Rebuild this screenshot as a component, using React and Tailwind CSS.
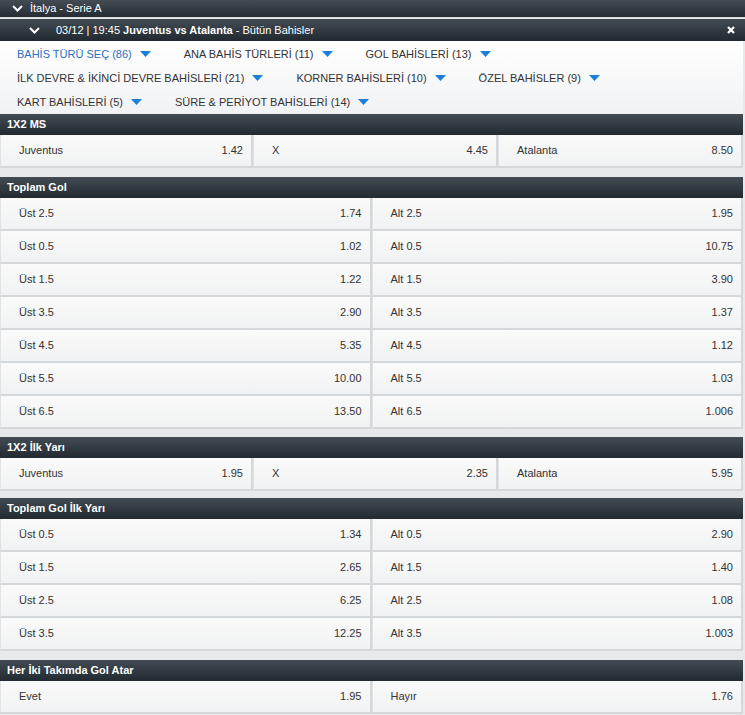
const font = { fontFamily: '"Liberation Sans", Arial, sans-serif' }

const filters = [
  [
    ['BAHİS TÜRÜ SEÇ (86)', true],
    ['ANA BAHİS TÜRLERİ (11)'],
    ['GOL BAHİSLERİ (13)'],
  ],
  [
    ['İLK DEVRE & İKİNCİ DEVRE BAHİSLERİ (21)'],
    ['KORNER BAHİSLERİ (10)'],
    ['ÖZEL BAHİSLER (9)'],
  ],
  [['KART BAHİSLERİ (5)'], ['SÜRE & PERİYOT BAHİSLERİ (14)']],
]

const markets = [
  {
    title: '1X2 MS',
    cols: 3,
    gap: 'mb-[9px]',
    rows: [
      [
        ['Juventus', '1.42'],
        ['X', '4.45'],
        ['Atalanta', '8.50'],
      ],
    ],
  },
  {
    title: 'Toplam Gol',
    cols: 2,
    gap: 'mb-[8px]',
    rows: [
      [['Üst 2.5', '1.74'], ['Alt 2.5', '1.95']],
      [['Üst 0.5', '1.02'], ['Alt 0.5', '10.75']],
      [['Üst 1.5', '1.22'], ['Alt 1.5', '3.90']],
      [['Üst 3.5', '2.90'], ['Alt 3.5', '1.37']],
      [['Üst 4.5', '5.35'], ['Alt 4.5', '1.12']],
      [['Üst 5.5', '10.00'], ['Alt 5.5', '1.03']],
      [['Üst 6.5', '13.50'], ['Alt 6.5', '1.006']],
    ],
  },
  {
    title: '1X2 İlk Yarı',
    cols: 3,
    gap: 'mb-[7px]',
    rows: [
      [
        ['Juventus', '1.95'],
        ['X', '2.35'],
        ['Atalanta', '5.95'],
      ],
    ],
  },
  {
    title: 'Toplam Gol İlk Yarı',
    cols: 2,
    gap: 'mb-[9px]',
    rows: [
      [['Üst 0.5', '1.34'], ['Alt 0.5', '2.90']],
      [['Üst 1.5', '2.65'], ['Alt 1.5', '1.40']],
      [['Üst 2.5', '6.25'], ['Alt 2.5', '1.08']],
      [['Üst 3.5', '12.25'], ['Alt 3.5', '1.003']],
    ],
  },
  {
    title: 'Her İki Takımda Gol Atar',
    cols: 2,
    gap: 'mb-[9px]',
    rows: [[['Evet', '1.95'], ['Hayır', '1.76']]],
  },
]

const Chevron = () => (
  <svg width="11" height="7" viewBox="0 0 11 7">
    <polyline points="1,1 5.5,5.5 10,1" fill="none" stroke="#fff" strokeWidth="2" />
  </svg>
)

const Caret = () => (
  <svg width="11" height="6" viewBox="0 0 11 6">
    <polygon points="0,0 11,0 5.5,6" fill="#1a7fd6" />
  </svg>
)

const App = () => {
  return (
    <div className="min-h-screen bg-[#e8e9ea] text-[11px] text-[#333]" style={font}>
      <div className="h-[18px] flex items-center bg-gradient-to-b from-[#444d55] to-[#252c33] text-white border-b border-[#d9dde0]">
        <div className="w-[30px] flex justify-center pl-[4px]">
          <Chevron />
        </div>
        <span>İtalya - Serie A</span>
      </div>
      <div className="mt-[1px] h-[22px] flex items-center bg-gradient-to-b from-[#434c54] to-[#222930] text-white">
        <div className="w-[56px] flex justify-center pl-[17px] pr-[4px]">
          <Chevron />
        </div>
        <span>
          03/12 | 19:45 <b>Juventus vs Atalanta</b> - Bütün Bahisler
        </span>
        <svg className="ml-auto mr-[10px]" width="8" height="8" viewBox="0 0 8 8">
          <path d="M1 1 L7 7 M7 1 L1 7" stroke="#fff" strokeWidth="2.2" />
        </svg>
      </div>
      <div className="mr-[2px] pl-[17px] pt-[1px] bg-gradient-to-b from-white to-[#f1f2f4] h-[73px] flex flex-col">
        {filters.map((row, i) => (
          <div key={i} className="h-[24px] shrink-0 flex items-center gap-[33px]">
            {row.map(([label, active]) => (
              <div key={label} className="flex items-center gap-[8px]">
                <span className={active ? 'text-[#2a6fbf]' : 'text-[#333]'}>{label}</span>
                <Caret />
              </div>
            ))}
          </div>
        ))}
      </div>
      {markets.map((m) => (
        <div key={m.title} className={'mr-[2px] ' + m.gap}>
          <div className="h-[21px] flex items-center pl-[7px] font-bold text-white bg-gradient-to-b from-[#434c54] to-[#232a31]">
            {m.title}
          </div>
          {m.rows.map((row, ri) => (
            <div
              key={ri}
              className={m.cols === 3 ? 'grid grid-cols-[253px_245px_1fr]' : 'grid grid-cols-2'}
            >
              {row.map(([label, odd]) => (
                <div
                  key={label}
                  className="h-[33px] flex items-center justify-between pl-[18px] pr-[8px] bg-gradient-to-b from-[#fafafa] to-[#f1f2f3] border-r-2 border-b-2 border-[#d4d8da] border-l border-l-[#e0e3e5]"
                >
                  <span>{label}</span>
                  <span>{odd}</span>
                </div>
              ))}
            </div>
          ))}
        </div>
      ))}
    </div>
  )
}

export default App
